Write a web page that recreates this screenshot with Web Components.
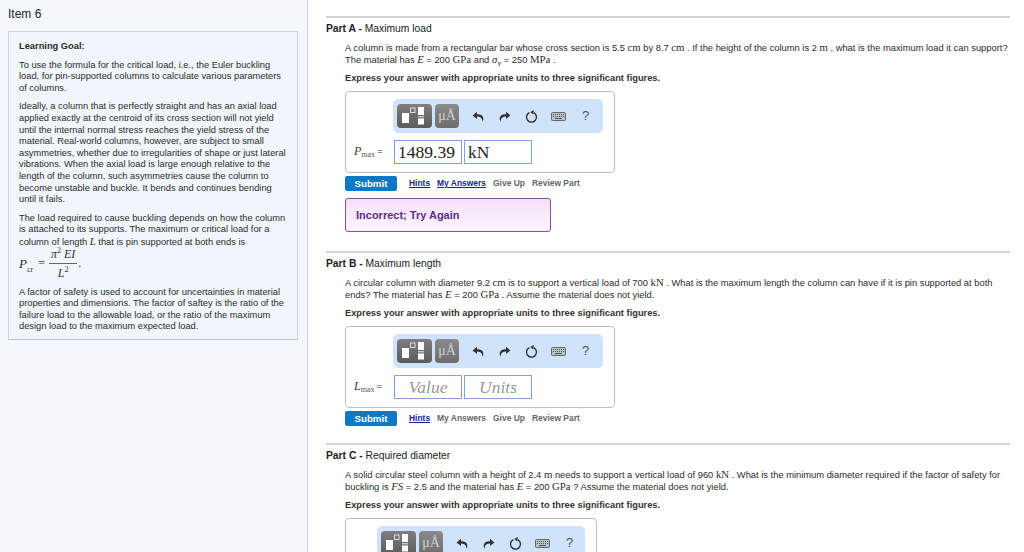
<!DOCTYPE html>
<html>
<head>
<meta charset="utf-8">
<title>Item 6</title>
<style>
    html, body { margin: 0; height: 552px; overflow: hidden; background: #fff; }
    body { font-family: "Liberation Sans", Arial, sans-serif; color: #2b2b2b; }
</style>
</head>
<body>
<hw-page>
    <hw-sidebar slot="side" title="Item 6">
        <hw-goal>
            <p><b>Learning Goal:</b></p>
            <p>To use the formula for the critical load, i.e., the Euler buckling load, for pin-supported columns to calculate various parameters of columns.</p>
            <p>Ideally, a column that is perfectly straight and has an axial load applied exactly at the centroid of its cross section will not yield until the internal normal stress reaches the yield stress of the material. Real-world columns, however, are subject to small asymmetries, whether due to irregularities of shape or just lateral vibrations. When the axial load is large enough relative to the length of the column, such asymmetries cause the column to become unstable and buckle. It bends and continues bending until it fails.</p>
            <p class="tight">The load required to cause buckling depends on how the column is attached to its supports. The maximum or critical load for a column of length <m-x i>L</m-x> that is pin supported at both ends is</p>
            <m-eq></m-eq>
            <p>A factor of safety is used to account for uncertainties in material properties and dimensions. The factor of saftey is the ratio of the failure load to the allowable load, or the ratio of the maximum design load to the maximum expected load.</p>
        </hw-goal>
    </hw-sidebar>

    <hw-part letter="A" name="Maximum load">
        <span slot="text">A column is made from a rectangular bar whose cross section is 5.5 <m-x>cm</m-x> by 8.7 <m-x>cm</m-x> . If the height of the column is 2 <m-x>m</m-x> , what is the maximum load it can support? The material has <m-x i>E</m-x> = 200 <m-x>GPa</m-x> and <m-x i>σ</m-x><sub style="font-size:7px;font-family:'Liberation Serif',serif;font-style:italic;line-height:0">Y</sub> = 250 <m-x>MPa</m-x> .</span>
        <hw-answer slot="answer" sym="P" sub="max" value="1489.39" units="kN"></hw-answer>
        <hw-actions slot="actions" answers></hw-actions>
        <hw-feedback slot="feedback">Incorrect; Try Again</hw-feedback>
    </hw-part>

    <hw-part letter="B" name="Maximum length" style="--part-top: 19px">
        <span slot="text">A circular column with diameter 9.2 <m-x>cm</m-x> is to support a vertical load of 700 <m-x>kN</m-x> . What is the maximum length the column can have if it is pin supported at both ends? The material has <m-x i>E</m-x> = 200 <m-x>GPa</m-x> . Assume the material does not yield.</span>
        <hw-answer slot="answer" sym="L" sub="max"></hw-answer>
        <hw-actions slot="actions"></hw-actions>
    </hw-part>

    <hw-part letter="C" name="Required diameter" style="--part-top: 17px">
        <span slot="text">A solid circular steel column with a height of 2.4 <m-x>m</m-x> needs to support a vertical load of 960 <m-x>kN</m-x> . What is the minimum diameter required if the factor of safety for buckling is <m-x i>FS</m-x> = 2.5 and the material has <m-x i>E</m-x> = 200 <m-x>GPa</m-x> ? Assume the material does not yield.</span>
        <hw-answer slot="answer" narrow></hw-answer>
    </hw-part>
</hw-page>

<script>
const SANS = '"Liberation Sans", Arial, sans-serif';
const SERIF = '"Liberation Serif", "Times New Roman", serif';

function shadow(el, html) {
    el.attachShadow({mode: 'open'}).innerHTML = html;
}

class HwPage extends HTMLElement {
    constructor() {
        super();
        shadow(this, `
<style>
    :host { display: grid; grid-template-columns: 308px 1fr; height: 552px; overflow: hidden; }
    .main { padding: 16px 14px 0 18px; min-width: 0; }
</style>
<slot name="side"></slot>
<div class="main"><slot></slot></div>`);
    }
}

class HwSidebar extends HTMLElement {
    constructor() {
        super();
        shadow(this, `
<style>
    :host { display: block; height: 552px; box-sizing: border-box; background: #f4f8fd; border-right: 1px solid #c5d1e2; padding: 0 9px 0 8px; }
    h1 { margin: 0; padding-top: 8px; height: 31px; box-sizing: border-box; font: 400 12px/13px ${SANS}; color: #222; }
</style>
<h1></h1>
<slot></slot>`);
        this.shadowRoot.querySelector('h1').textContent = this.getAttribute('title');
    }
}

class HwGoal extends HTMLElement {
    constructor() {
        super();
        shadow(this, `
<style>
    :host { display: block; box-sizing: border-box; width: 290px; height: 309px; background: #f1f6fc; border: 1px solid #c9d6e5; border-bottom-color: #b7c6d8; padding: 9px 10px 0 10px; font: 9.300px/11.600px ${SANS}; color: #2b2b2b; }
    ::slotted(p) { margin: 0 0 7px !important; }
    ::slotted(p.tight) { margin: 0 !important; }
</style>
<slot></slot>`);
    }
}

class MX extends HTMLElement {
    constructor() {
        super();
        shadow(this, `
<style>
    :host { display: inline; font-family: ${SERIF}; font-size: 1.150em; line-height: 1; }
    :host([i]) { font-style: italic; }
</style>
<slot></slot>`);
    }
}

class MEq extends HTMLElement {
    constructor() {
        super();
        shadow(this, `
<style>
    :host { display: flex; align-items: center; height: 30px; margin-bottom: 8px; font-family: ${SERIF}; font-size: 12px; color: #333; white-space: nowrap; }
    .lhs { font-size: 13px; margin-right: 2px; }
    .lhs sub { font-size: 8px; font-style: normal; line-height: 0; }
    .frac { display: inline-flex; flex-direction: column; align-items: center; margin: 0 1px 0 4px; font-style: italic; line-height: 14px; }
    .top { border-bottom: 1px solid #666; padding: 0 2px 2px; }
    .bottom { padding-top: 2px; }
    sup { font-size: 8px; font-style: normal; line-height: 0; }
</style>
<i class="lhs">P<sub>cr</sub></i>&nbsp;=
<span class="frac"><span class="top">π<sup>2</sup> EI</span><span class="bottom">L<sup>2</sup></span></span>.`);
    }
}

class HwPart extends HTMLElement {
    constructor() {
        super();
        shadow(this, `
<style>
    :host { display: block; margin-top: var(--part-top, 0); border-top: 2px solid #d4d4d4; padding-top: 5px; font: 9.350px/12px ${SANS}; color: #2b2b2b; }
    h2 { margin: 0 0 7px; font: 400 10.300px/12px ${SANS}; color: #222; }
    h2 b { font-weight: 700; }
    .body { padding-left: 19px; }
    .text { min-height: 24px; }
    .hint { margin: 6px 0 7px; font-size: 9.300px; font-weight: 700; color: #333; line-height: 12px; }
</style>
<h2><b></b> <span></span></h2>
<div class="body">
    <div class="text"><slot name="text"></slot></div>
    <div class="hint">Express your answer with appropriate units to three significant figures.</div>
    <slot name="answer"></slot>
    <slot name="actions"></slot>
    <slot name="feedback"></slot>
</div>`);
        const root = this.shadowRoot;
        root.querySelector('h2 b').textContent = `Part ${this.getAttribute('letter')} -`;
        root.querySelector('h2 span').textContent = this.getAttribute('name');
    }
}

class HwToolbar extends HTMLElement {
    constructor() {
        super();
        shadow(this, `
<style>
    :host { display: flex; align-items: center; box-sizing: border-box; height: 34px; background: #cfe4fb; border-radius: 5px; padding: 0 0 0 4px; }
    .btn { box-sizing: border-box; height: 24px; border-radius: 4px; background: linear-gradient(#7e7e7e, #5b5b5b); display: flex; align-items: center; justify-content: center; }
    .tpl { width: 35px; }
    .unit { width: 24px; margin-left: 3px; background: linear-gradient(#8a8a8a, #6e6e6e); color: #cfcfcf; font: 14px/24px ${SERIF}; }
    .tool { width: 27px; height: 24px; display: flex; align-items: center; justify-content: center; }
    .first { margin-left: 5px; }
    .q { font: 13px/24px ${SANS}; color: #555; }
    svg { display: block; }
</style>
<div class="btn tpl">
    <svg width="35" height="24" viewBox="0 0 35 24">
        <rect x="5" y="9" width="7" height="10" fill="#fff"/>
        <rect x="13.500" y="4" width="4.500" height="4.500" fill="none" stroke="#ddd" stroke-width="1"/>
        <rect x="21" y="3" width="6" height="8" fill="#fff"/>
        <rect x="21" y="12.300" width="6" height="1" fill="#eee"/>
        <rect x="21" y="14.500" width="6" height="6" fill="#fff"/>
    </svg>
</div>
<div class="btn unit">μÅ</div>
<div class="tool first">
    <svg width="12" height="11" viewBox="0 0 12 11"><path d="M5 .8 .6 4.400 5 8V5.600c2.600 0 4.200.8 5 3 .4 1 .5 1.800.5 2.200 1-1.800 1.200-3.900.2-5.400C9.600 3.800 7.500 3.300 5 3.300z" fill="#333"/></svg>
</div>
<div class="tool">
    <svg width="12" height="11" viewBox="0 0 12 11"><path d="M7 .8 11.400 4.400 7 8V5.600c-2.600 0-4.200.8-5 3-.4 1-.5 1.800-.5 2.200-1-1.800-1.200-3.900-.2-5.400C2.400 3.800 4.500 3.300 7 3.300z" fill="#333"/></svg>
</div>
<div class="tool">
    <svg width="13" height="13" viewBox="0 0 13 13"><path d="M4.400 2.600a5 5 0 1 0 4.200 0" fill="none" stroke="#333" stroke-width="1.400"/><path d="M8.900 0 8.200 4.600 5.300 2z" fill="#333"/></svg>
</div>
<div class="tool">
    <svg width="15" height="9" viewBox="0 0 15 9"><rect x=".5" y=".5" width="14" height="8" rx="1" fill="#b9c3cc" stroke="#666"/><path d="M2 2.500h11M2 4.500h11" stroke="#555" stroke-width="1" stroke-dasharray="1 1"/><rect x="4" y="6" width="7" height="1" fill="#555"/></svg>
</div>
<div class="tool q">?</div>`);
    }
}

class HwAnswer extends HTMLElement {
    constructor() {
        super();
        const value = this.getAttribute('value');
        const units = this.getAttribute('units');
        shadow(this, `
<style>
    :host { display: block; box-sizing: border-box; width: 270px; border: 1px solid #bdbdbd; border-radius: 4px; padding: 7px 11px 8px 47px; }
    :host([narrow]) { width: 252px; padding-left: 31px; height: 60px; }
    .row { display: flex; align-items: center; margin-top: 7px; position: relative; }
    .label { position: absolute; left: -39px; top: 4px; font: 10px/14px ${SERIF}; color: #333; white-space: nowrap; }
    .label i { font-size: 12px; }
    .label sub { font-size: 8px; line-height: 0; vertical-align: -2px; color: #555; margin-right: 2px; }
    .field { box-sizing: border-box; width: 68px; height: 24px; margin-left: 1px; border: 1px solid #7fa3de; background: #fff; font: 17.500px/22px ${SERIF}; color: #222; padding: 0 3px; white-space: nowrap; }
    .field + .field { margin-left: 2px; }
    .empty { font-style: italic; color: #999; text-align: center; }
</style>
<hw-toolbar></hw-toolbar>
<div class="row">
    <div class="label"><i></i><sub></sub>=</div>
    <div class="field ${value ? '' : 'empty'}"></div>
    <div class="field ${units ? '' : 'empty'}"></div>
</div>`);
        const root = this.shadowRoot;
        if (!this.hasAttribute('sym')) root.querySelector('.row').style.display = 'none';
        root.querySelector('.label i').textContent = this.getAttribute('sym') || '';
        root.querySelector('.label sub').textContent = this.getAttribute('sub') || '';
        const fields = root.querySelectorAll('.field');
        fields[0].textContent = value || 'Value';
        fields[1].textContent = units || 'Units';
    }
}

class HwActions extends HTMLElement {
    constructor() {
        super();
        shadow(this, `
<style>
    :host { display: flex; align-items: center; height: 15px; margin-top: 3px; font: 700 8.450px/15px ${SANS}; color: #666; white-space: nowrap; }
    .submit { box-sizing: border-box; width: 52px; height: 15px; border-radius: 2px; background: #0b79c6; color: #fff; text-align: center; font-size: 9.700px; margin-right: 12px; }
    a { color: #12288a; text-decoration: underline; }
    span { margin-right: 7px; }
    .off { color: #666; text-decoration: none; }
</style>
<div class="submit">Submit</div>
<span><a>Hints</a></span>
<span><a class="${this.hasAttribute('answers') ? '' : 'off'}">My Answers</a></span>
<span>Give Up</span>
<span>Review Part</span>`);
    }
}

class HwFeedback extends HTMLElement {
    constructor() {
        super();
        shadow(this, `
<style>
    :host { display: flex; align-items: center; box-sizing: border-box; width: 206px; height: 34px; margin-top: 7px; padding-left: 10px; border: 1px solid #8a4b9f; border-radius: 3px; background: linear-gradient(#f5e0fb, #fdf5ff); color: #5b2f86; font: 700 11px/14px ${SANS}; }
</style>
<slot></slot>`);
    }
}

customElements.define('hw-page', HwPage);
customElements.define('hw-sidebar', HwSidebar);
customElements.define('hw-goal', HwGoal);
customElements.define('m-x', MX);
customElements.define('m-eq', MEq);
customElements.define('hw-part', HwPart);
customElements.define('hw-toolbar', HwToolbar);
customElements.define('hw-answer', HwAnswer);
customElements.define('hw-actions', HwActions);
customElements.define('hw-feedback', HwFeedback);
</script>
</body>
</html>
